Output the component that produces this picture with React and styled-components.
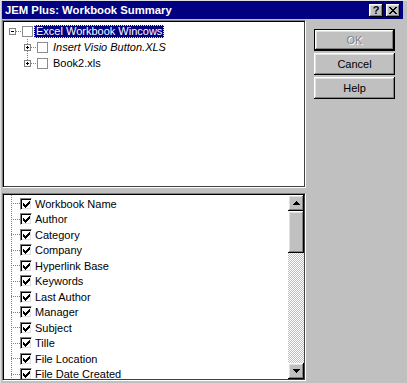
import React from 'react'
import styled, {createGlobalStyle, css} from 'styled-components'

const fields = [
    'Workbook Name', 'Author', 'Category', 'Company', 'Hyperlink Base', 'Keywords',
    'Last Author', 'Manager', 'Subject', 'Tille', 'File Location', 'File Date Created',
];

const workbooks = [
    {name: 'Insert Visio Button.XLS', italic: true},
    {name: 'Book2.xls'},
];

// classic 7x7 check glyph
const CHECK = [
    '......#',
    '.....##',
    '#...###',
    '##.###.',
    '#####..',
    '.###...',
    '..#....',
];

const CheckMark = () => (
    <svg width="7" height="7" viewBox="0 0 7 7" shapeRendering="crispEdges">
        {CHECK.map((row, y) => row.split('').map((c, x) => c === '#'
            ? <rect key={x + '-' + y} x={x} y={y} width="1" height="1" fill="#000"/>
            : null))}
    </svg>
);

const ExpanderIcon = ({open}) => (
    <svg width="7" height="7" viewBox="0 0 7 7" shapeRendering="crispEdges">
        <rect x="0.5" y="0.5" width="6" height="6" fill="#fff" stroke="#808080"/>
        <rect x="2" y="3" width="3" height="1" fill="#000"/>
        {!open && <rect x="3" y="2" width="1" height="3" fill="#000"/>}
    </svg>
);

const Arrow = ({down}) => (
    <svg width="7" height="4" viewBox="0 0 7 4" shapeRendering="crispEdges">
        {down
            ? <path d="M0 0h7v1h-1v1h-1v1h-1v1h-1v-1h-1v-1h-1v-1h-1z" fill="#000"/>
            : <path d="M3 0h1v1h1v1h1v1h1v1h-7v-1h1v-1h1v-1h1z" fill="#000"/>}
    </svg>
);

const CloseGlyph = () => (
    <svg width="8" height="7" viewBox="0 0 8 7" shapeRendering="crispEdges">
        <path d="M0 0h2v1h1v1h2v-1h1v-1h2v1h-1v1h-1v1h-1v1h1v1h1v1h1v1h-2v-1h-1v-1h-2v1h-1v1h-2v-1h1v-1h1v-1h1v-1h-1v-1h-1v-1h-1z" fill="#000"/>
    </svg>
);

export default function App() {
    return (
        <Window>
            <GlobalStyle/>
            <TitleBar>
                <TitleText>JEM Plus: Workbook Summary</TitleText>
                <CaptionButton>?</CaptionButton>
                <CaptionButton><CloseGlyph/></CaptionButton>
            </TitleBar>
            <Body>
                <LeftColumn>
                    <TreePanel>
                        <TreeRow $indent={5}>
                            <ExpanderIcon open/>
                            <HDots $w={6}/>
                            <TreeBox/>
                            <TreeLabel $selected>Excel Workbook Wincows</TreeLabel>
                        </TreeRow>
                        <ChildGroup>
                            {workbooks.map(w => (
                                <TreeRow key={w.name} $indent={20}>
                                    <ExpanderIcon/>
                                    <HDots $w={6}/>
                                    <TreeBox/>
                                    <TreeLabel $italic={w.italic}>{w.name}</TreeLabel>
                                </TreeRow>
                            ))}
                        </ChildGroup>
                    </TreePanel>
                    <ListPanel>
                        <FieldList>
                            {fields.map(f => (
                                <FieldRow key={f}>
                                    <HDots $w={9}/>
                                    <CheckBox><CheckMark/></CheckBox>
                                    <FieldLabel>{f}</FieldLabel>
                                </FieldRow>
                            ))}
                        </FieldList>
                        <ScrollBar>
                            <ScrollButton><Arrow/></ScrollButton>
                            <Thumb/>
                            <Track/>
                            <ScrollButton><Arrow down/></ScrollButton>
                        </ScrollBar>
                    </ListPanel>
                </LeftColumn>
                <ButtonColumn>
                    <Button $default $disabled>OK</Button>
                    <Button>Cancel</Button>
                    <Button>Help</Button>
                </ButtonColumn>
            </Body>
        </Window>
    )
}

const GlobalStyle = createGlobalStyle`
  html, body {
    margin: 0;
    padding: 0;
    background: #c0c0c0;
  }
  body {
    font-family: "Liberation Sans", Arial, sans-serif;
    font-size: 11px;
    color: #000;
  }
`;

const raised = css`
  background: #c0c0c0;
  box-shadow: inset -1px -1px #000, inset 1px 1px #fff, inset -2px -2px #808080, inset 2px 2px #dfdfdf;
`;

const Window = styled.div`
  width: 407px;
  height: 383px;
  box-sizing: border-box;
  padding: 1px 4px 0 2px;
  background: #c0c0c0;
  box-shadow: inset 1px 1px #dfdfdf;
  display: flex;
  flex-direction: column;
  overflow: hidden;
`;

const TitleBar = styled.div`
  height: 18px;
  flex-shrink: 0;
  background: #000080;
  color: #fff;
  display: flex;
  align-items: center;
  padding: 0 3px 0 3px;
  font-weight: bold;
  font-size: 11.3px;
`;

const TitleText = styled.span`
  flex: 1;
  white-space: nowrap;
`;

const CaptionButton = styled.div`
  ${raised};
  width: 14px;
  height: 13px;
  margin-left: 3px;
  box-sizing: border-box;
  display: flex;
  align-items: center;
  justify-content: center;
  color: #000;
  font-size: 11px;
  font-weight: bold;
  line-height: 1;
`;

const Body = styled.div`
  display: flex;
  margin-top: 1px;
  flex: 1;
  min-height: 0;
`;

const LeftColumn = styled.div`
  width: 304px;
  display: flex;
  flex-direction: column;
  gap: 5px;
`;

const sunken = css`
  box-sizing: border-box;
  background: #fff;
  border: 1px solid;
  border-color: #808080 #fff #fff #808080;
  box-shadow: inset 1px 1px #000, inset -1px -1px #404040;
  padding: 1px;
  overflow: hidden;
`;

const TreePanel = styled.div`
  ${sunken};
  height: 168px;
  padding-top: 2px;
`;

const TreeRow = styled.div`
  display: flex;
  align-items: center;
  height: 16px;
  padding-left: ${p => p.$indent}px;
  white-space: nowrap;
`;

const ChildGroup = styled.div`
  background: repeating-linear-gradient(to bottom, #808080 0 1px, transparent 1px 2px) no-repeat 23px 0 / 1px calc(100% - 8px);
`;

const HDots = styled.span`
  width: ${p => p.$w}px;
  height: 1px;
  flex-shrink: 0;
  background: repeating-linear-gradient(to right, #808080 0 1px, transparent 1px 2px);
`;

const TreeBox = styled.span`
  width: 11px;
  height: 11px;
  box-sizing: border-box;
  flex-shrink: 0;
  border: 1px solid #8c8c8c;
  background: #fff;
`;

const TreeLabel = styled.span`
  margin-left: ${p => p.$selected ? 1 : 3}px;
  padding: 0 2px;
  height: 13px;
  line-height: 13px;
  font-style: ${p => p.$italic ? 'italic' : 'normal'};
  ${p => p.$selected && css`
    background: #000080;
    color: #fff;
    outline: 1px dotted #e8e890;
    outline-offset: -1px;
  `}
`;

const ListPanel = styled.div`
  ${sunken};
  height: 188px;
  display: flex;
`;

const FieldList = styled.div`
  flex: 1;
  padding-top: 1px;
  overflow: hidden;
  background: repeating-linear-gradient(to bottom, #808080 0 1px, transparent 1px 2px) no-repeat 7px 0 / 1px 100%;
`;

const FieldRow = styled.div`
  display: flex;
  align-items: center;
  height: 15.5px;
  padding-left: 7px;
  white-space: nowrap;
`;

const CheckBox = styled.span`
  width: 12px;
  height: 12px;
  box-sizing: border-box;
  flex-shrink: 0;
  border: 1px solid;
  border-color: #808080 #fff #fff #808080;
  box-shadow: inset 1px 1px #000, inset -1px -1px #dfdfdf;
  background: #fff;
  display: flex;
  align-items: center;
  justify-content: center;
  padding: 1px 0 0 1px;
`;

const FieldLabel = styled.span`
  margin-left: 3px;
`;

const ScrollBar = styled.div`
  width: 16px;
  flex-shrink: 0;
  display: flex;
  flex-direction: column;
`;

const ScrollButton = styled.div`
  ${raised};
  height: 16px;
  flex-shrink: 0;
  display: flex;
  align-items: center;
  justify-content: center;
`;

const Thumb = styled.div`
  ${raised};
  height: 42px;
  flex-shrink: 0;
`;

const Track = styled.div`
  flex: 1;
  background: repeating-conic-gradient(#fff 0 25%, #c0c0c0 0 50%) 0 0 / 2px 2px;
`;

const ButtonColumn = styled.div`
  margin-left: 8px;
  padding-top: 9px;
  display: flex;
  flex-direction: column;
  gap: 2px;
`;

const Button = styled.div`
  ${raised};
  box-sizing: border-box;
  width: 81px;
  height: 22px;
  display: flex;
  align-items: center;
  justify-content: center;
  font-size: 11px;
  color: ${p => p.$disabled ? '#808080' : '#000'};
  text-shadow: ${p => p.$disabled ? '1px 1px #fff' : 'none'};
  ${p => p.$default && css`
    border: 1px solid #000;
  `}
`;
